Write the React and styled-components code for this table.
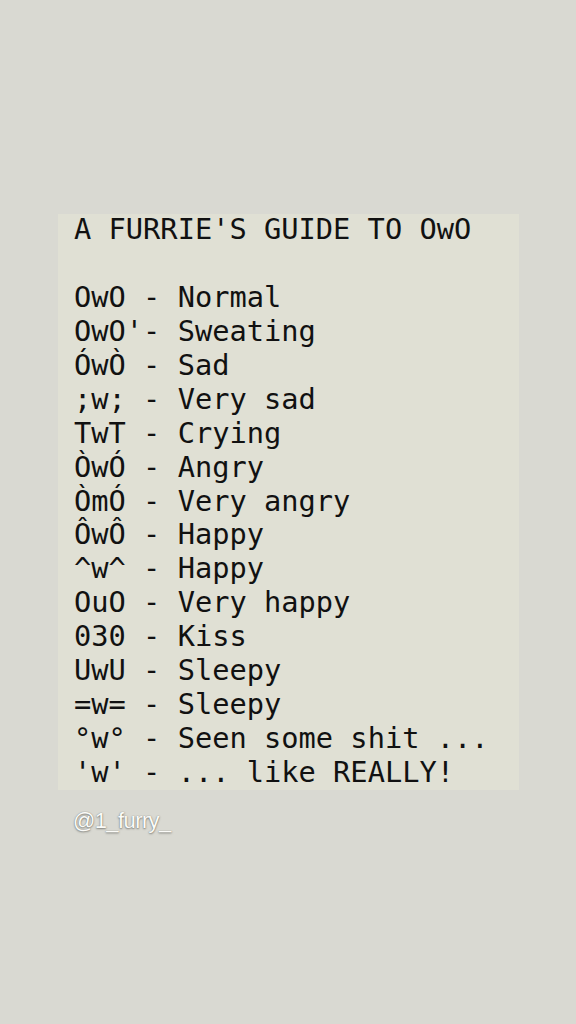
import styled, { createGlobalStyle } from "styled-components";

const rows = [
    ["OwO ", "Normal"],
    ["OwO'", "Sweating"],
    ["ÓwÒ ", "Sad"],
    [";w; ", "Very sad"],
    ["TwT ", "Crying"],
    ["ÒwÓ ", "Angry"],
    ["ÒmÓ ", "Very angry"],
    ["ÔwÔ ", "Happy"],
    ["^w^ ", "Happy"],
    ["OuO ", "Very happy"],
    ["030 ", "Kiss"],
    ["UwU ", "Sleepy"],
    ["=w= ", "Sleepy"],
    ["°w° ", "Seen some shit ..."],
    ["'w' ", "... like REALLY!"],
];

const App = () => {
    return (
        <Page>
            <GlobalStyle />
            <Note>
                <Line>A FURRIE'S GUIDE TO OwO</Line>
                <Line>&nbsp;</Line>
                {rows.map(([face, meaning], i) => (
                    <Line key={i}>{face}- {meaning}</Line>
                ))}
            </Note>
            <Handle>@1_furry_</Handle>
        </Page>
    );
};

export default App;

const GlobalStyle = createGlobalStyle`
    html, body {
        margin: 0;
        padding: 0;
        background: #d9d9d2;
    }
`;

const Page = styled.div`
    box-sizing: border-box;
    width: 576px;
    height: 1024px;
    padding: 214px 0 0 58px;
    background: #d9d9d2;
    display: flex;
    flex-direction: column;
    align-items: flex-start;
`;

const Note = styled.div`
    box-sizing: border-box;
    width: 461px;
    height: 576px;
    padding: 0 16px;
    background: #e0e0d4;
    font-family: "DejaVu Sans Mono", monospace;
    font-size: 28.7px;
    line-height: 33.94px;
    color: #111;
`;

const Line = styled.div`
    white-space: pre;
    position: relative;
    top: -1px;
`;

const Handle = styled.div`
    margin: 18px 0 0 15px;
    font-family: "Liberation Sans", Arial, sans-serif;
    font-size: 22px;
    letter-spacing: -0.6px;
    color: #fbfbf8;
    text-shadow: 0 1px 2px rgba(60, 60, 55, 0.55), 0 0 1px rgba(60, 60, 55, 0.5);
`;
